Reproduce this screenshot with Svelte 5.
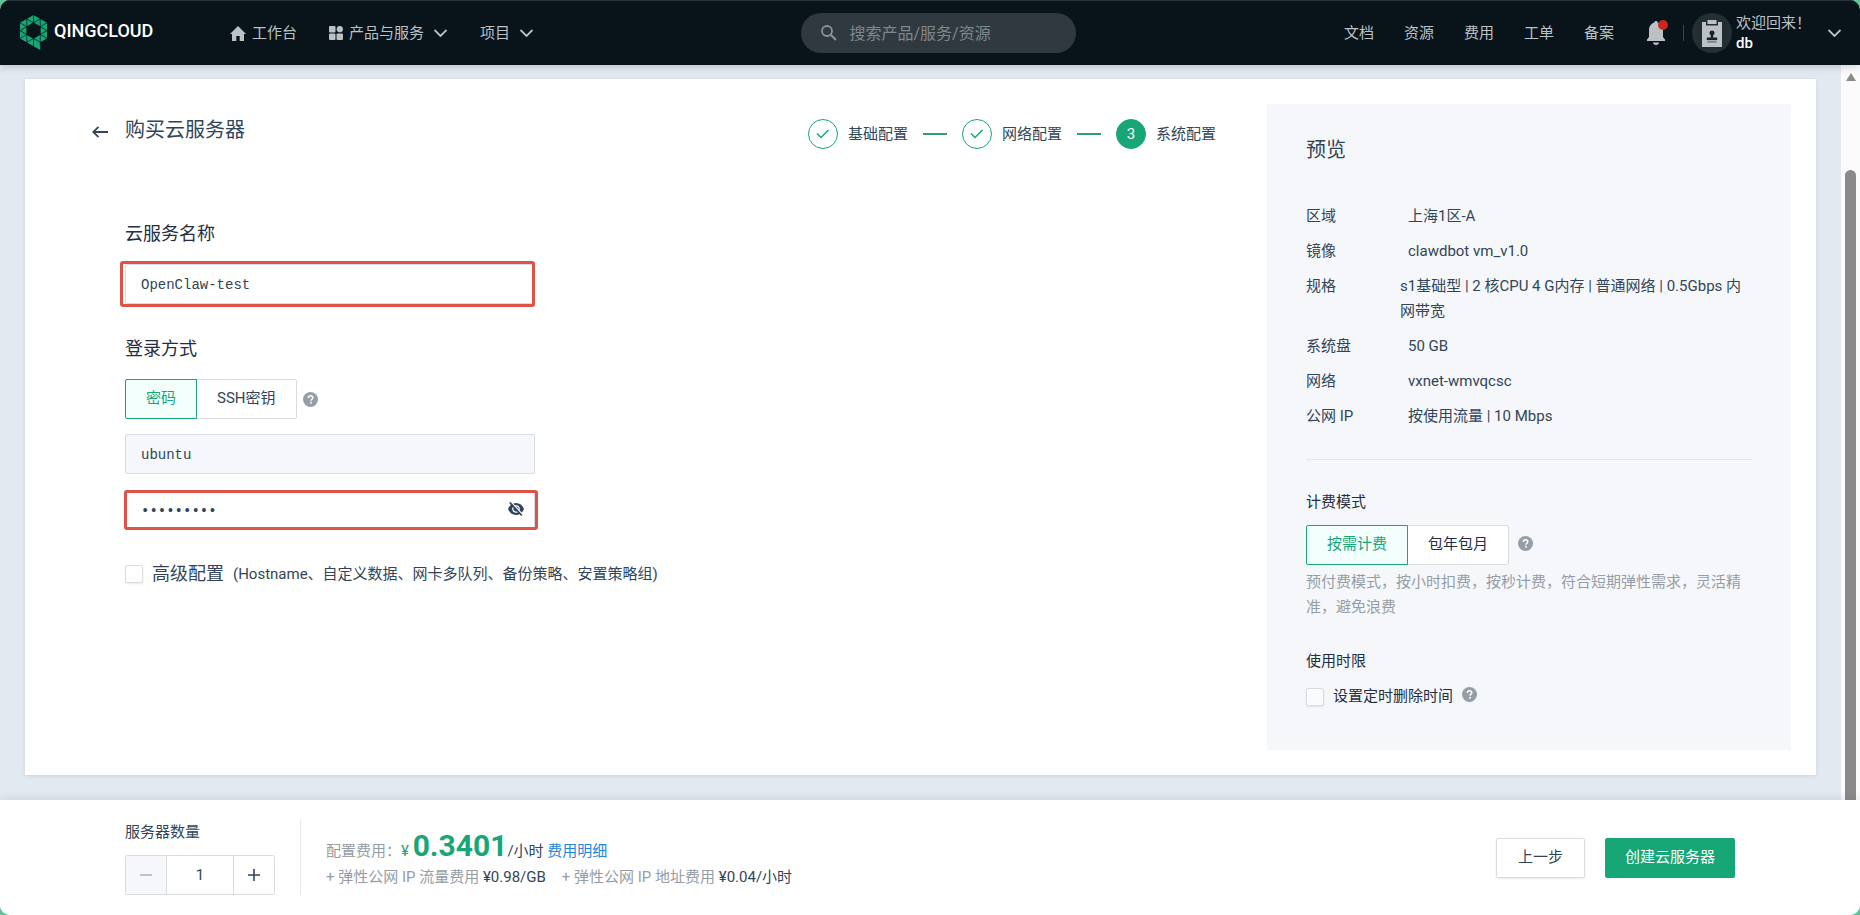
<script lang="ts">
  interface SpecRow {
    label: string;
    value: string;
    wide?: boolean;
  }

  const links = ["文档", "资源", "费用", "工单", "备案"];

  const steps = ["基础配置", "网络配置", "系统配置"];
  const currentStep = 2;

  const specs: SpecRow[] = [
    { label: "区域", value: "上海1区-A" },
    { label: "镜像", value: "clawdbot vm_v1.0" },
    { label: "规格", value: "s1基础型 | 2 核CPU 4 G内存 | 普通网络 | 0.5Gbps 内网带宽", wide: true },
    { label: "系统盘", value: "50 GB" },
    { label: "网络", value: "vxnet-wmvqcsc" },
    { label: "公网 IP", value: "按使用流量 | 10 Mbps" },
  ];

  let serverName = $state("OpenClaw-test");
  let password = $state("Qc#204876");
  let showPassword = $state(false);
  let loginMode = $state("password");
  let billing = $state("hourly");
  let advanced = $state(false);
  let autoDelete = $state(false);
  let count = $state(1);
</script>

{#snippet chevron()}
  <svg class="chevron" viewBox="0 0 12 8" aria-hidden="true">
    <path d="M0 1l6 6 6-6" fill="none" stroke="currentColor" stroke-width="1.8" />
  </svg>
{/snippet}

{#snippet help()}
  <svg class="help" viewBox="0 0 16 16" aria-hidden="true">
    <circle cx="8" cy="8" r="8" fill="#959da6" />
    <path d="M5.7 6.3c0-1.4 1-2.3 2.4-2.3s2.3.9 2.3 2.1c0 1.6-1.9 1.7-1.9 3.3" fill="none" stroke="#fff" stroke-width="1.7" />
    <rect x="7.6" y="10.6" width="1.8" height="1.8" fill="#fff" />
  </svg>
{/snippet}

<div class="window">
  <header class="topbar">
    <a class="brand" href="#home">
      <svg class="logo" viewBox="0 0 27 36" aria-hidden="true">
        <path
          d="M13.5 0L27 7.8v15.6l-6.75 3.9V35L13.5 31.2 0 23.4V7.8zM13.5 7.8l-6.75 3.9v7.8l6.75 3.9 6.75-3.9v-7.8z"
          fill="#16a674"
          fill-rule="evenodd"
        />
        <path
          d="M6.75 0v31M20.25 0v31M13.5 0v8M13.5 23v8M0 0l27 15.6M0 15.6L27 0M0 15.6l27 15.6M0 31.2l27-15.6M0 7.8l6.75 3.9M20.25 19.5L27 23.4M27 7.8l-6.75 3.9M0 23.4l6.75-3.9"
          fill="none"
          stroke="#08131a"
          stroke-width="0.7"
        />
      </svg>
      <span>QINGCLOUD</span>
    </a>

    <nav class="menu">
      <a href="#workbench">
        <svg class="home" viewBox="0 0 16 15" aria-hidden="true">
          <path d="M8 0l8 8h-2v7H9.7v-5H6.3v5H2V8H0z" fill="currentColor" />
        </svg>
        工作台
      </a>
      <a href="#products">
        <svg class="grid" viewBox="0 0 14 14" aria-hidden="true">
          <g fill="currentColor">
            <rect width="6.5" height="6.5" rx="1" />
            <circle cx="10.8" cy="3.2" r="3.1" />
            <rect y="7.5" width="6.5" height="6.5" rx="1" />
            <rect x="7.5" y="7.5" width="6.5" height="6.5" rx="1" />
          </g>
        </svg>
        产品与服务
        {@render chevron()}
      </a>
      <a href="#projects">
        项目
        {@render chevron()}
      </a>
    </nav>

    <label class="search">
      <svg viewBox="0 0 16 16" aria-hidden="true">
        <circle cx="6" cy="6" r="5" fill="none" stroke="currentColor" stroke-width="1.8" />
        <path d="M9.7 9.7l5.3 5.3" stroke="currentColor" stroke-width="2" />
      </svg>
      <input type="search" placeholder="搜索产品/服务/资源" aria-label="搜索" />
    </label>

    <nav class="links">
      {#each links as link}
        <a href="#{link}">{link}</a>
      {/each}
    </nav>

    <button class="bell" aria-label="通知">
      <svg viewBox="0 0 18 24" aria-hidden="true">
        <path d="M9 0c1 0 1.6.7 1.6 1.6C13.8 2.5 16 5.3 16 9v7l2 2.5V20H0v-1.5L2 16V9c0-3.7 2.2-6.5 5.4-7.4C7.4.7 8 0 9 0zM6 21.5h6c0 1.5-1.3 2.5-3 2.5s-3-1-3-2.5z" fill="currentColor" />
      </svg>
      <span class="dot"></span>
    </button>

    <button class="account">
      <span class="avatar">
        <svg viewBox="0 0 20 27" aria-hidden="true">
          <path d="M0 2h4v3.5h12V2h4v25H0z" fill="#bcc1c6" />
          <rect x="5.5" width="9" height="4" fill="#bcc1c6" />
          <path d="M8.8 15.5c-.8-.7-1.3-1.4-1.3-2.4a2.5 2.5 0 015 0c0 1-.5 1.7-1.3 2.4v2h4v2.5H4.8v-2.5h4z" fill="#17222a" />
          <rect x="5.3" y="20.7" width="9.4" height="2" fill="#7d858b" />
        </svg>
      </span>
      <span class="welcome">
        欢迎回来！
        <strong>db</strong>
      </span>
      {@render chevron()}
    </button>
  </header>

  <div class="viewport">
    <main class="card">
      <section class="wizard">
        <div class="heading">
          <button class="back" aria-label="返回">
            <svg viewBox="0 0 16 12" aria-hidden="true">
              <path d="M6.5.8L1.2 6l5.3 5.2M1.2 6H16" fill="none" stroke="currentColor" stroke-width="1.8" />
            </svg>
          </button>
          <h1>购买云服务器</h1>
          <ol class="steps">
            {#each steps as step, i}
              <li class:current={i === currentStep}>
                <span class="marker">
                  {#if i < currentStep}
                    <svg viewBox="0 0 14 10" aria-hidden="true">
                      <path d="M1 4.5L5 8.5 12.5 1" fill="none" stroke="currentColor" stroke-width="1.5" />
                    </svg>
                  {:else}
                    {i + 1}
                  {/if}
                </span>
                {step}
              </li>
            {/each}
          </ol>
        </div>

        <form class="form" onsubmit={(e) => e.preventDefault()}>
          <label class="title" for="server-name">云服务名称</label>
          <div class="field marked-name">
            <input id="server-name" type="text" bind:value={serverName} />
          </div>

          <h2 class="title">登录方式</h2>
          <div class="toggle-row">
            <div class="toggle">
              <button type="button" class:active={loginMode === "password"} onclick={() => (loginMode = "password")}>密码</button>
              <button type="button" class:active={loginMode === "ssh"} onclick={() => (loginMode = "ssh")}>SSH密钥</button>
            </div>
            {@render help()}
          </div>
          <div class="field user">
            <input type="text" value="ubuntu" aria-label="用户名" disabled />
          </div>
          <div class="field marked-password">
            <input type={showPassword ? "text" : "password"} value={password} oninput={(e) => (password = e.currentTarget.value)} aria-label="密码" />
            <button type="button" class="eye" aria-label="显示密码" onclick={() => (showPassword = !showPassword)}>
              <svg viewBox="0 0 16 14" aria-hidden="true">
                <path d="M0 7c1.5-3.8 4.4-6 8-6s6.5 2.2 8 6c-1.5 3.8-4.4 6-8 6S1.5 10.8 0 7z" fill="currentColor" />
                <circle cx="8" cy="7" r="3.2" fill="none" stroke="#fff" stroke-width="1.2" />
                <path d="M3 0l12 13" stroke="#fff" stroke-width="1.4" />
                <path d="M1.8.5l12 13" stroke="currentColor" stroke-width="1.6" />
              </svg>
            </button>
          </div>

          <label class="check advanced">
            <input type="checkbox" bind:checked={advanced} />
            <span class="advanced-title">高级配置</span>
            <span>(Hostname、自定义数据、网卡多队列、备份策略、安置策略组)</span>
          </label>
        </form>
      </section>

      <aside class="preview">
        <h2>预览</h2>
        <dl>
          {#each specs as spec}
            <div class="spec" class:wide={spec.wide}>
              <dt>{spec.label}</dt>
              <dd>{spec.value}</dd>
            </div>
          {/each}
        </dl>
        <hr />
        <h3>计费模式</h3>
        <div class="toggle-row billing">
          <div class="toggle">
            <button type="button" class:active={billing === "hourly"} onclick={() => (billing = "hourly")}>按需计费</button>
            <button type="button" class:active={billing === "monthly"} onclick={() => (billing = "monthly")}>包年包月</button>
          </div>
          {@render help()}
        </div>
        <p class="note">预付费模式，按小时扣费，按秒计费，符合短期弹性需求，灵活精准，避免浪费</p>
        <h3>使用时限</h3>
        <label class="check">
          <input type="checkbox" bind:checked={autoDelete} />
          <span>设置定时删除时间</span>
          {@render help()}
        </label>
      </aside>
    </main>

    <div class="scrollbar" aria-hidden="true">
      <svg viewBox="0 0 10 8"><path d="M5 0l5 8H0z" fill="#8a8a8a" /></svg>
      <div class="thumb"></div>
    </div>
  </div>

  <footer class="summary">
    <div class="quantity">
      <label for="count">服务器数量</label>
      <div class="stepper">
        <button disabled={count <= 1} aria-label="减少" onclick={() => (count -= 1)}>
          <svg viewBox="0 0 12 12" aria-hidden="true"><path d="M0 6h12" stroke="currentColor" stroke-width="1.6" /></svg>
        </button>
        <input id="count" type="text" inputmode="numeric" bind:value={count} />
        <button aria-label="增加" onclick={() => (count += 1)}>
          <svg viewBox="0 0 12 12" aria-hidden="true"><path d="M0 6h12M6 0v12" stroke="currentColor" stroke-width="1.6" /></svg>
        </button>
      </div>
    </div>

    <div class="cost">
      <p class="price">
        <span class="muted">配置费用：</span><span class="amount">¥ <b>0.3401</b></span><span>/小时</span>
        <a href="#detail">费用明细</a>
      </p>
      <p class="extras">
        <span><span class="muted">+ 弹性公网 IP 流量费用</span> ¥0.98/GB</span>
        <span><span class="muted">+ 弹性公网 IP 地址费用</span> ¥0.04/小时</span>
      </p>
    </div>

    <div class="actions">
      <button>上一步</button>
      <button class="primary">创建云服务器</button>
    </div>
  </footer>
</div>

<style>
  :global(body) {
    margin: 0;
    background: #5cc49a;
  }

  .window {
    --green: #17a676;
    --text: #324558;
    --heading: #242e42;
    --muted: #959da6;
    --border: #d8dde2;
    display: flex;
    flex-direction: column;
    min-height: 100vh;
    border-radius: 10px;
    overflow: hidden;
    background: #e3e9f1;
    color: var(--text);
    font-family: Roboto, "Noto Sans CJK SC", sans-serif;
    font-size: 15px;
    line-height: 25px;
  }

  .window :global(*) {
    box-sizing: border-box;
  }

  svg {
    display: block;
    flex: none;
  }

  h1,
  h2,
  h3,
  p,
  ol,
  dl,
  dd {
    margin: 0;
    padding: 0;
    font-weight: 400;
  }

  a {
    color: inherit;
    text-decoration: none;
  }

  button,
  input {
    font: inherit;
    color: inherit;
  }

  button {
    padding: 0;
    border: 0;
    background: none;
    cursor: pointer;
  }

  .topbar {
    position: relative;
    z-index: 1;
    display: flex;
    align-items: center;
    height: 65px;
    padding: 0 19px 0 20px;
    border-top: 1px solid #263239;
    background: #08131a;
    color: #bcc1c6;
    box-shadow: 0 2px 8px rgba(36, 46, 66, 0.2);
  }

  .brand {
    display: flex;
    align-items: center;
    gap: 7px;
    width: 210px;
    color: #fff;
    font-size: 18px;
    font-weight: 500;
    line-height: 24px;
  }

  .brand span {
    padding-bottom: 4px;
  }

  .logo {
    width: 27px;
    height: 36px;
  }

  .menu {
    display: flex;
    gap: 32px;
  }

  .menu a {
    display: flex;
    align-items: center;
    gap: 6px;
  }

  .home {
    width: 16px;
    height: 15px;
  }

  .grid {
    width: 14px;
    height: 14px;
  }

  .chevron {
    width: 13px;
    height: 8px;
    margin-left: 4px;
  }

  .menu a + a {
    padding-right: 1px;
  }

  .search {
    display: flex;
    align-items: center;
    gap: 12px;
    width: 275px;
    height: 40px;
    margin: 0 auto;
    padding: 0 20px;
    border-radius: 20px;
    background: #30393f;
    color: #8b9298;
  }

  .search svg {
    width: 16px;
    height: 16px;
  }

  .search input {
    flex: 1;
    min-width: 0;
    padding: 0;
    border: 0;
    outline: 0;
    background: none;
    font-size: 16px;
  }

  .search input::placeholder {
    color: #7f878d;
  }

  .links {
    display: flex;
    gap: 30px;
  }

  .bell {
    position: relative;
    width: 18px;
    height: 24px;
    margin: 0 18px 0 33px;
  }

  .dot {
    position: absolute;
    top: -1px;
    right: -3px;
    width: 10px;
    height: 10px;
    border-radius: 50%;
    background: #ca2621;
  }

  .account {
    display: flex;
    align-items: center;
    text-align: left;
  }

  .account::before {
    content: "";
    width: 1px;
    height: 16px;
    margin-right: 8px;
    background: #3a444b;
  }

  .avatar {
    display: flex;
    align-items: center;
    justify-content: center;
    width: 40px;
    height: 40px;
    margin-right: 4px;
    border-radius: 50%;
    background: #242e35;
  }

  .avatar svg {
    width: 20px;
    height: 27px;
  }

  .welcome {
    display: flex;
    flex-direction: column;
    width: 88px;
    line-height: 20px;
  }

  .welcome strong {
    color: #fff;
    font-weight: 500;
  }

  .viewport {
    display: flex;
    flex: 1;
  }

  .card {
    display: flex;
    flex: 1;
    align-items: flex-start;
    margin: 14px 25px 25px;
    padding: 25px;
    background: #fff;
    box-shadow: 0 1px 4px rgba(36, 46, 66, 0.12);
  }

  .wizard {
    flex: 1;
    padding: 11px 51px 0 42px;
  }

  .heading {
    display: flex;
    align-items: flex-start;
    line-height: 30px;
  }

  .back {
    display: flex;
    align-items: center;
    width: 33px;
    height: 34px;
  }

  .back svg {
    width: 16px;
    height: 12px;
  }

  h1 {
    font-size: 20px;
  }

  .steps {
    display: flex;
    margin: 4px 0 0 auto;
    list-style: none;
  }

  .steps li {
    display: flex;
    align-items: center;
    gap: 10px;
  }

  .steps li + li::before {
    content: "";
    width: 24px;
    height: 2px;
    margin: 0 5px 0 15px;
    background: #2e9c78;
  }

  .marker {
    display: flex;
    align-items: center;
    justify-content: center;
    width: 30px;
    height: 30px;
    border: 1px solid var(--green);
    border-radius: 50%;
    color: var(--green);
  }

  .marker svg {
    width: 14px;
    height: 10px;
  }

  .current .marker {
    background: var(--green);
    color: #fff;
  }

  .form {
    padding: 71px 0 0 33px;
  }

  .title {
    display: block;
    margin-bottom: 16px;
    color: var(--heading);
    font-size: 18px;
    line-height: 28px;
  }

  .field {
    position: relative;
    width: 410px;
  }

  .field input {
    display: block;
    width: 100%;
    height: 40px;
    padding: 1px 15px 0;
    border: 1px solid var(--border);
    border-radius: 2px;
    outline: 0;
    background: #fff;
    font-family: "Liberation Mono", monospace;
    font-size: 14px;
  }

  .field input:disabled {
    background: #f5f7fa;
  }

  .marked-name {
    margin-bottom: 31px;
  }

  .marked-name::after,
  .marked-password::after {
    content: "";
    position: absolute;
    border: 3px solid #e05247;
    border-radius: 3px;
    pointer-events: none;
  }

  .marked-name::after {
    inset: -3px 0 -3px -5px;
  }

  .marked-password::after {
    inset: 0 -3px 0 -1px;
  }

  .user {
    margin: 15px 0 16px;
  }

  .eye {
    position: absolute;
    top: 12px;
    right: 11px;
  }

  .eye svg {
    width: 16px;
    height: 14px;
  }

  .toggle-row {
    display: flex;
    align-items: center;
    gap: 6px;
  }

  .billing {
    gap: 9px;
  }

  .toggle {
    display: flex;
  }

  .toggle button {
    height: 40px;
    padding: 0 20px 2px;
    border: 1px solid var(--border);
    border-radius: 0 2px 2px 0;
    background: #fff;
  }

  .toggle button + button {
    margin-left: -1px;
  }

  .toggle button:first-child {
    border-radius: 2px 0 0 2px;
  }

  .toggle .active {
    z-index: 1;
    border-color: var(--green);
    background: #f2fffc;
    color: var(--green);
  }

  .help {
    width: 15px;
    height: 15px;
  }

  .preview .help {
    margin-bottom: 4px;
  }

  .check {
    display: flex;
    align-items: center;
    gap: 9px;
  }

  .check input {
    appearance: none;
    width: 18px;
    height: 18px;
    margin: 0;
    border: 1px solid var(--border);
    border-radius: 2px;
    background: #fff;
    box-shadow: 0 1px 2px rgba(36, 46, 66, 0.1);
  }

  .check input:checked {
    border-color: var(--green);
    background: var(--green);
  }

  .preview .check input:not(:checked) {
    background: #f9fbfd;
  }

  .advanced {
    margin-top: 30px;
    line-height: 28px;
  }

  .advanced-title {
    font-size: 18px;
  }

  .preview {
    flex: 0 0 524px;
    padding: 31px 38px 41px 39px;
    background: #f5f7fa;
    color: var(--heading);
  }

  .preview h2 {
    margin-bottom: 39px;
    color: var(--text);
    font-size: 20px;
    line-height: 30px;
  }

  .preview h3 {
    margin-bottom: 10px;
    font-size: 15px;
  }

  dl {
    display: flex;
    flex-direction: column;
    gap: 10px;
    color: var(--text);
  }

  .spec {
    display: flex;
  }

  dt {
    flex: none;
    width: 94px;
  }

  dd {
    padding-left: 8px;
  }

  .wide dd {
    padding-left: 0;
  }

  hr {
    height: 1px;
    margin: 30px 0;
    border: 0;
    background: #e3e8ec;
  }

  .note {
    margin: 5px 0 29px;
    color: var(--muted);
  }

  .scrollbar {
    display: flex;
    flex-direction: column;
    align-items: center;
    gap: 89px;
    width: 19px;
    padding-top: 8px;
    background: #fbfbfc;
  }

  .scrollbar svg {
    width: 10px;
    height: 8px;
  }

  .thumb {
    flex: 1;
    width: 11px;
    border-radius: 6px 6px 0 0;
    background: #8a8a8a;
  }

  .summary {
    position: relative;
    display: flex;
    align-items: center;
    min-height: 115px;
    padding: 0 125px;
    background: #fff;
    box-shadow: 0 -2px 8px rgba(36, 46, 66, 0.1);
  }

  .quantity {
    display: flex;
    flex-direction: column;
    gap: 10px;
    padding-right: 25px;
    border-right: 1px solid #e3e8ec;
  }

  .stepper {
    display: flex;
    width: 150px;
    height: 40px;
    border: 1px solid var(--border);
    border-radius: 2px;
  }

  .stepper button {
    display: flex;
    align-items: center;
    justify-content: center;
    width: 40px;
  }

  .stepper button:disabled {
    background: #f5f7fa;
    color: #a9b0b8;
  }

  .stepper svg {
    width: 12px;
    height: 12px;
  }

  .stepper input {
    flex: 1;
    min-width: 0;
    padding: 0;
    border: solid var(--border);
    border-width: 0 1px;
    outline: 0;
    text-align: center;
  }

  .cost {
    padding: 6px 0 0 25px;
  }

  .muted {
    color: var(--muted);
  }

  .price {
    line-height: 28px;
  }

  .price a {
    color: #1f86d9;
  }

  .amount {
    color: var(--green);
  }

  .amount b {
    font-size: 30px;
    font-weight: 700;
  }

  .extras {
    display: flex;
    gap: 16px;
  }

  .actions {
    display: flex;
    gap: 20px;
    margin-left: auto;
  }

  .actions button {
    height: 40px;
    padding: 0 21px;
    border: 1px solid var(--border);
    border-radius: 2px;
    background: #fff;
    box-shadow: 0 1px 2px rgba(36, 46, 66, 0.1);
  }

  .actions .primary {
    padding: 0 19px;
    border-color: var(--green);
    background: var(--green);
    box-shadow: none;
    color: #fff;
  }
</style>
